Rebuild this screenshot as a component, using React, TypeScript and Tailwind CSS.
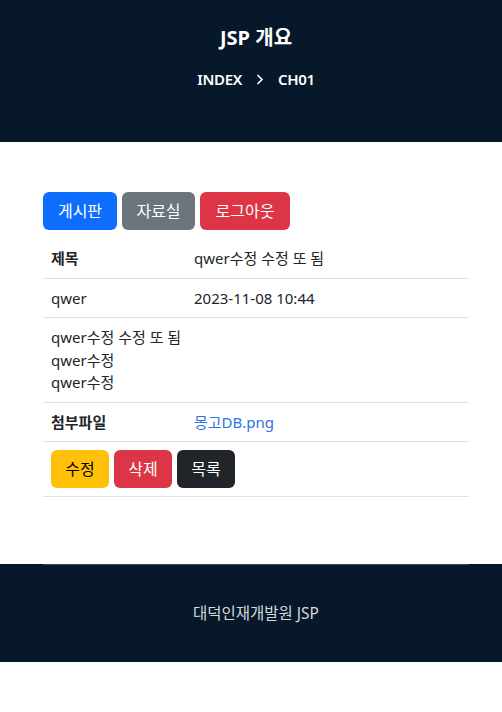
import React from 'react';

const font = { fontFamily: '"Noto Sans", "Noto Sans CJK KR", sans-serif' };

function Btn({ label, cls }: { label: string; cls: string }) {
  return (
    <button className={`inline-flex items-center justify-center h-[38px] px-3 rounded-md text-[16px] ${cls}`}>
      {label}
    </button>
  );
}

export default function App() {
  return (
    <div className="w-[502px] bg-white" style={font}>
      {/* header */}
      <header className="h-[142px] bg-[#07182a] text-white flex flex-col items-center pl-[43px] pr-[33px]">
        <h1 className="mt-[24px] text-[20px] font-bold leading-[28px]">JSP 개요</h1>
        <div className="mt-[17px] flex items-center text-[15px] font-semibold leading-[20px] tracking-[-0.3px]">
          <span>INDEX</span>
          <svg className="mx-[14px]" width="8" height="11" viewBox="0 0 8 11" fill="none">
            <path d="M1.5 1 L6 5.5 L1.5 10" stroke="white" strokeWidth="1.6" />
          </svg>
          <span>CH01</span>
        </div>
      </header>

      {/* content */}
      <main className="h-[422px] pl-[43px] pr-[33px] pt-[50px] text-[15px] text-[#212529] leading-[22.5px]">
        <div className="flex gap-[5px]">
          <Btn label="게시판" cls="bg-[#0d6efd] text-white w-[74px]" />
          <Btn label="자료실" cls="bg-[#6c757d] text-white w-[73px]" />
          <Btn label="로그아웃" cls="bg-[#dc3545] text-white w-[90px]" />
        </div>
        <table className="w-full mt-[9px] border-collapse">
          <tbody>
            <tr className="border-b border-[#dee2e6]">
              <td className="w-[143px] px-2 py-2 font-bold">제목</td>
              <td className="px-2 py-2">qwer수정 수정 또 됨</td>
            </tr>
            <tr className="border-b border-[#dee2e6]">
              <td className="px-2 py-2">qwer</td>
              <td className="px-2 py-2">2023-11-08 10:44</td>
            </tr>
            <tr className="border-b border-[#dee2e6]">
              <td colSpan={2} className="px-2 py-2">
                qwer수정 수정 또 됨<br />qwer수정<br />qwer수정
              </td>
            </tr>
            <tr className="border-b border-[#dee2e6]">
              <td className="px-2 py-2 font-bold">첨부파일</td>
              <td className="px-2 py-2">
                <a className="text-[#2f74e6]">몽고DB.png</a>
              </td>
            </tr>
            <tr className="border-b border-[#dee2e6]">
              <td colSpan={2} className="px-2 py-2">
                <div className="flex gap-[5px]">
                  <Btn label="수정" cls="bg-[#ffc107] text-black w-[58px]" />
                  <Btn label="삭제" cls="bg-[#dc3545] text-white w-[58px]" />
                  <Btn label="목록" cls="bg-[#212529] text-white w-[58px]" />
                </div>
              </td>
            </tr>
          </tbody>
        </table>
      </main>

      {/* footer */}
      <footer className="h-[98px] bg-[#07182a] flex flex-col pl-[43px] pr-[33px]">
        <div className="h-px bg-[#3a4350]" />
        <div className="flex-1 flex items-center justify-center text-[15.5px] text-[#d5d8dc]">
          대덕인재개발원 JSP
        </div>
      </footer>
    </div>
  );
}
